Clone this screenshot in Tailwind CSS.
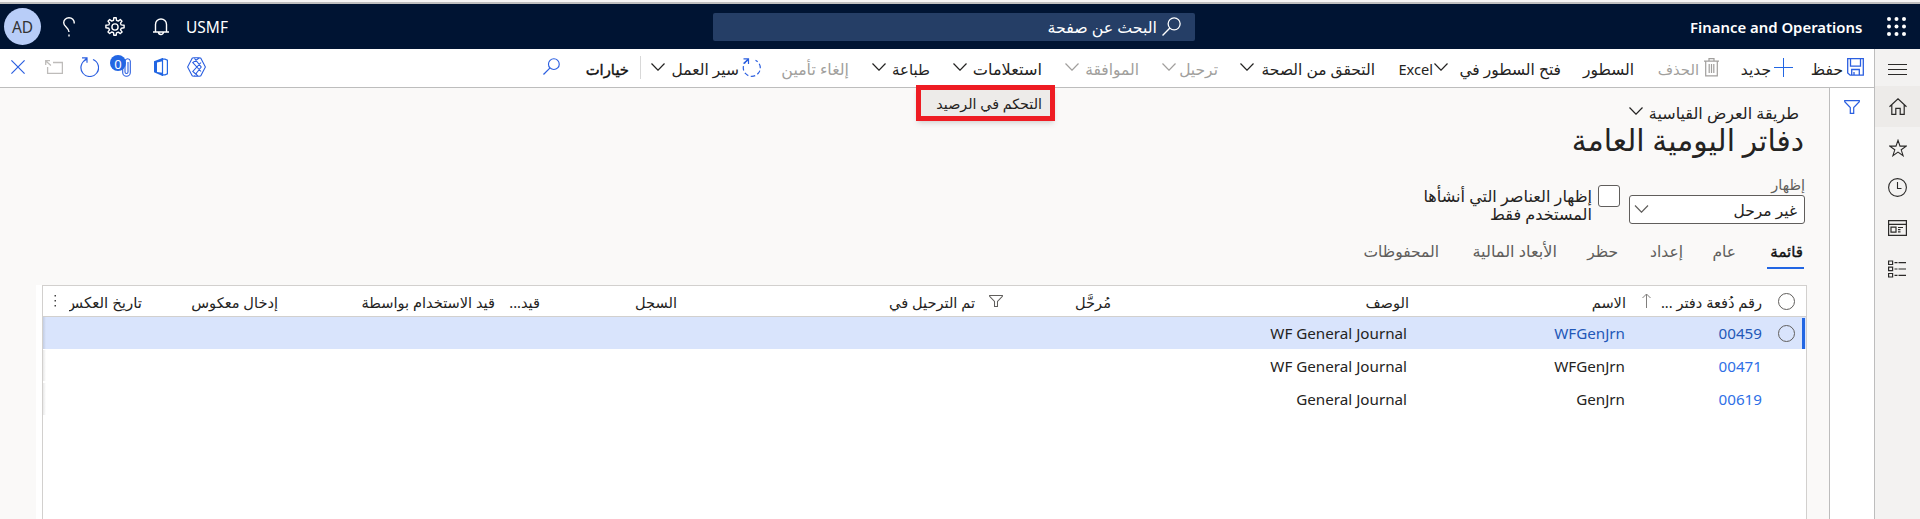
<!DOCTYPE html>
<html lang="ar" dir="rtl">
<head>
<meta charset="utf-8">
<title>Finance and Operations</title>
<script src="https://cdn.jsdelivr.net/npm/@tailwindcss/browser@4"></script>
</head>
<body class="h-[519px] w-[1920px] overflow-hidden bg-[#faf9f8] font-['Noto_Sans','DejaVu_Sans',sans-serif] text-[15.5px] leading-5 text-[#242322] whitespace-nowrap">
<svg class="hidden">
  <symbol id="chev" viewBox="0 0 14 8"><path d="M.5 .5 7 7.2 13.500 .5" fill="none" stroke="currentColor" stroke-width="1.2"/></symbol>
  <symbol id="mag" viewBox="0 0 18 18"><circle cx="11.500" cy="6.500" r="5.700" fill="none" stroke="currentColor" stroke-width="1.200"/><path d="M7.500 10.500.5 17.500" stroke="currentColor" stroke-width="1.300"/></symbol>
  <symbol id="funnel" viewBox="0 0 16 14"><path d="M.7.7h14.600v1L9.700 7.500v5.800H6.300V7.500L.7 1.700Z" fill="none" stroke="currentColor" stroke-width="1.200"/></symbol>
</svg>

<div class="h-1 border-b-2 border-[#bfbfbf] bg-[#f5f5f5]"></div>
<!-- Top bar -->
<header class="flex h-[45px] items-center bg-[#001433] text-white">
  <svg class="ms-[14px] mb-px h-[19px] w-[19px]" viewBox="0 0 19 19" fill="#fff"><g id="r"><circle cx="2" cy="2" r="2"/><circle cx="9.500" cy="2" r="2"/><circle cx="17" cy="2" r="2"/></g><use href="#r" y="7.500"/><use href="#r" y="15"/></svg>
  <div dir="ltr" class="mr-[23px] w-[174px] text-[14.9px] font-semibold">Finance and Operations</div>
  <div class="ms-[495px] flex h-7 w-[482px] items-center rounded-[2px] bg-[#253e66]">
    <svg class="ms-[14px] h-[19px] w-[19px]"><use href="#mag"/></svg>
    <div class="ms-[5px] text-[15.8px]">البحث عن صفحة</div>
  </div>
  <div dir="ltr" class="mr-[485px] w-[42px] pt-px">USMF</div>
  <svg class="ms-[17px] h-[18px] w-[16px]" viewBox="0 0 16 18" fill="none" stroke="#fff" stroke-width="1.400"><path d="M2.500 13.500V6.500a5.500 5.500 0 0 1 11 0v7M0 14h16M5.500 14a2.500 2.500 0 0 0 5 0"/></svg>
  <svg class="ms-[28px] h-[20px] w-[20px]" viewBox="0 0 20 20" fill="none" stroke="#fff" stroke-width="1.400"><circle cx="10" cy="10" r="3.100"/><path stroke-linejoin="round" d="M8.500 3.300 8.800.8h2.400l.3 2.500 1.800.8 2-1.600 1.700 1.700-1.500 2 .7 1.700 2.900.4v2.500l-2.800.4-.8 1.700 1.600 2-1.800 1.700-2-1.500-1.800.7-.3 2.400H8.800l-.3-2.500-1.800-.7-2 1.500L3 14.900l1.500-2-.7-1.700L.9 10.800V8.300l2.900-.4.7-1.700L3 4.200l1.700-1.700 2 1.600Z"/></svg>
  <svg class="ms-[30px] h-[20px] w-[12px]" viewBox="0 0 12 20" fill="none" stroke="#fff" stroke-width="1.400"><path d="M11.300 6.500C11.300 3 9 .8 6 .8S.7 3 .7 5.700c0 4.300 5.300 5 5.300 9.300M6 17.500v2"/></svg>
  <div class="ms-[22px] flex size-[37px] items-center justify-center rounded-full bg-[#b8cdf8] pt-px text-[15.5px] text-[#333]">AD</div>
</header>

<div class="flex h-[470px]">
  <!-- Navigation rail -->
  <nav class="flex w-[46px] flex-col border-l border-[#bdbdbd] bg-[#f3f2f1] text-[#2b2a29]">
    <div class="flex h-[37px] items-center justify-center pt-1"><svg class="h-[12px] w-[19px]" viewBox="0 0 19 12" stroke="currentColor" stroke-width="1"><path d="M0 .5h19M0 5.500h19M0 10.500h19"/></svg></div>
    <div class="flex h-[41px] items-center justify-center bg-[#edebe9]"><svg class="h-[17px] w-[18px]" viewBox="0 0 18 17" fill="none" stroke="currentColor" stroke-width="1.200"><path d="M.5 8.700 9 .8l8.500 7.900M2.800 6.800v9.600h4v-6h4.400v6h4V6.800"/></svg></div>
    <div class="flex h-[41px] items-center justify-center"><svg class="h-[18px] w-[18px]" viewBox="0 0 18 18" fill="none" stroke="currentColor" stroke-width="1.100"><path d="m9 1.300 2 5.800h6.200l-5 3.700 1.900 5.900L9 13.100l-5.100 3.600 1.900-5.900-5-3.700H7Z"/></svg></div>
    <div class="flex h-[39px] items-center justify-center"><svg class="h-[19px] w-[19px]" viewBox="0 0 19 19" fill="none" stroke="currentColor" stroke-width="1.100"><circle cx="9.500" cy="9.500" r="8.900"/><path d="M9.500 4v6.500h4"/></svg></div>
    <div class="flex h-[41px] items-center justify-center"><svg class="h-[16px] w-[19px]" viewBox="0 0 19 16" fill="none" stroke="currentColor" stroke-width="1.200"><path d="M.6.6h17.800v14.800H.6ZM.6 4.300h17.800M3 7.200h5v5H3ZM10 7.500h5M10 9.700h2.500M10 11.900h2.500"/></svg></div>
    <div class="flex h-[41px] items-center justify-center"><svg class="h-[18px] w-[19px]" viewBox="0 0 19 18" fill="none" stroke="currentColor" stroke-width="1.200"><path d="M.6 1h4v3.500h-4ZM.6 7.200h4v3.500h-4ZM.6 13.500h4V17h-4ZM6.500 2.700h3M10.500 2.700H18M6.500 9h3M10.500 9H18M6.500 15.300h3M10.500 15.300H18"/></svg></div>
  </nav>

  <div class="flex w-[1874px] flex-col">
    <!-- Action bar -->
    <div class="relative flex h-[39px] items-center border-b border-[#bdbdbd] bg-white pt-px">
      <svg class="ms-[10px] mb-[3px] h-[18px] w-[17px] text-[#2b5fe0]" viewBox="0 0 17 18" fill="none" stroke="currentColor" stroke-width="1.300"><path d="M.7.7h15.600v16.500H3.200L.7 14.900ZM3.500.7v7.500h10V.7M4.700 17v-5.500h7.600V17M7 17v-3"/></svg>
      <div class="ms-[4px] w-[31px] pt-px">حفظ</div>
      <svg class="ms-[19px] mb-[3px] h-[19px] w-[19px]" viewBox="0 0 19 19"><path d="M9.500 0v19M0 9.500h19" stroke="#2266e3"/></svg>
      <div class="ms-[3px] w-[30px] pt-px">جديد</div>
      <svg class="ms-[22px] mb-[3px] h-[19px] w-[15px] text-[#a19f9d]" viewBox="0 0 15 19" fill="none" stroke="currentColor" stroke-width="1.200"><path d="M0 3.200h15M5 3V.7h5V3M1.700 3.200v14.700h11.600V3.200M5.200 6v9M7.500 6v9M9.800 6v9"/></svg>
      <div class="ms-[5px] w-[41px] pt-px text-[14.8px] text-[#a19f9d]">الحذف</div>
      <div class="ms-[24px] w-[50px] pt-px">السطور</div>
      <div class="ms-[23px] w-[103px] pt-px">فتح السطور في</div>
      <svg class="ms-[10px] mb-[4px] h-[8px] w-[14px]"><use href="#chev"/></svg>
      <div class="ms-[1px] w-[34px] pt-px text-[14.6px]">Excel</div>
      <div class="ms-[24px] w-[115px] pt-px">التحقق من الصحة</div>
      <svg class="ms-[6px] mb-[4px] h-[8px] w-[14px]"><use href="#chev"/></svg>
      <div class="ms-[22px] w-[37px] pt-px text-[#a19f9d]">ترحيل</div>
      <svg class="ms-[5px] mb-[4px] h-[8px] w-[14px] text-[#a19f9d]"><use href="#chev"/></svg>
      <div class="ms-[23px] w-[54px] pt-px text-[#a19f9d]">الموافقة</div>
      <svg class="ms-[6px] mb-[4px] h-[8px] w-[14px] text-[#a19f9d]"><use href="#chev"/></svg>
      <div class="ms-[23px] w-[69px] pt-px text-[16.2px]">استعلامات</div>
      <svg class="ms-[6px] mb-[4px] h-[8px] w-[14px]"><use href="#chev"/></svg>
      <div class="ms-[23px] w-[38px] pt-px text-[15px]">طباعة</div>
      <svg class="ms-[6px] mb-[4px] h-[8px] w-[14px]"><use href="#chev"/></svg>
      <div class="ms-[23px] w-[68px] pt-px text-[15.8px] text-[#a19f9d]">إلغاء تأمين</div>
      <svg class="ms-[20px] mb-[3px] h-[19px] w-[19px] text-[#2b5fe0]" viewBox="0 0 19 19" fill="none" stroke="currentColor" stroke-width="1.200"><path d="M5.500 2.500a8.500 8.500 0 1 0 8-.3" stroke-dasharray="4.500 2.500"/><path d="M1.500.9h5v5M6.500.9 1.500 5.500"/></svg>
      <div class="ms-[3px] w-[68px] pt-px">سير العمل</div>
      <svg class="ms-[6px] mb-[4px] h-[8px] w-[14px]"><use href="#chev"/></svg>
      <div class="ms-[10px] mb-[3px] h-[23px] w-px bg-[#d8d8d8]"></div>
      <div class="ms-[11px] w-[43px] pt-px text-[14.8px] text-[#111] [-webkit-text-stroke:0.4px]">خيارات</div>
      <svg class="ms-[26px] mb-[5px] h-[17px] w-[17px] text-[#2b5fe0]"><use href="#mag"/></svg>
      <svg class="ms-[337px] mb-[3px] h-[20px] w-[19px] text-[#2b5fe0]" viewBox="0 0 19 20" fill="none" stroke="currentColor" stroke-width="1.100"><path d="M6.500.8 5.200 1.300.6 10l4.600 8.700 1.300.5M12.500.8l1.300.5 4.600 8.700-4.600 8.700-1.300.5M6.500.8h6M6.500 19.200h6M7.500 1.500 14.200 10 7.500 18.500M12.500.8 5.800 5.500 14 14.500M14 5.500 5.800 14.500 11 19"/></svg>
      <svg class="ms-[19px] mb-[3px] h-[18px] w-[14px]" viewBox="0 0 14 18"><path d="M8.500 0 0 3.200v11L8.500 18v-3.200L3 14V4.500l5.500-1.300Z" fill="#2266e3"/><path d="M8.500 1.200H11l2.400 1v13.600l-2.400 1H8.500M8.500 0v18" fill="none" stroke="#2266e3" stroke-width="1.200"/></svg>
      <div class="relative mb-[3px] ms-[23px] h-[22px] w-[21px]">
        <svg class="absolute right-0 top-px h-[20px] w-[9px]" viewBox="0 0 9 20" fill="none" stroke="#2b5fe0" stroke-width="1.100"><path d="M.7 4v11.500a3.800 3.800 0 0 0 7.600 0V4a2.700 2.700 0 0 0-5.300 0v11a1.500 1.500 0 0 0 3 0V5"/></svg>
        <div class="absolute -top-[1px] left-0 flex size-[16px] items-center justify-center rounded-full bg-[#2266e3] pt-px text-[13px] text-white">0</div>
      </div>
      <svg class="ms-[11px] mb-[3px] h-[20px] w-[19px] text-[#2b5fe0]" viewBox="0 0 19 20" fill="none" stroke="currentColor" stroke-width="1.200"><path d="M6.500 2.500a8.800 8.800 0 1 0 6.500 0M2 .8h5v5M7 .8 3.500 4.500"/></svg>
      <svg class="ms-[17px] mb-[3px] h-[14px] w-[18px] text-[#bebcba]" viewBox="0 0 18 14" fill="none" stroke="currentColor" stroke-width="1.300"><path d="M8 2.500h9.400v10.800H2.600V7M.7 5V.7H5M.9.9l5 4.500"/></svg>
      <svg class="ms-[20px] mb-[3px] h-[14px] w-[14px]" viewBox="0 0 14 14"><path d="m.4.4 13.200 13.200M13.600.4.4 13.600" stroke="#2b5fe0" stroke-width="1.200"/></svg>
      <!-- Open submenu -->
      <div class="absolute left-[916px] top-[36px] z-10 h-[36px] w-[139px] border-[5px] border-[#ee1c23] bg-[#edebe9] ps-[8px] pt-[4px] text-[14.3px] shadow-md">التحكم في الرصيد</div>
    </div>

    <div class="flex h-[431px]">
      <aside class="flex w-[45px] justify-center border-l border-[#bdbdbd] bg-white pt-[12px] text-[#2b5fe0]"><svg class="h-[14px] w-[16px]"><use href="#funnel"/></svg></aside>
      <main class="flex w-[1829px] flex-col">
        <div class="flex h-[32px] items-center pt-[18px] ps-[30px]"><span class="w-[150px] text-[16px]">طريقة العرض القياسية</span><svg class="ms-[6px] mb-[4px] h-[8px] w-[14px]"><use href="#chev"/></svg></div>
        <h1 class="h-[58px] ps-[25px] text-[29.8px] leading-10">دفاتر اليومية العامة</h1>
        <div class="flex h-[48px] ps-[24px]">
          <div class="w-[176px]">
            <div class="-mt-[4px] h-[21px] pe-px text-[14.5px] text-[#605e5c]">إظهار</div>
            <div class="flex h-[29px] items-center justify-between rounded-[3px] border border-[#605e5c] bg-white pe-[4px] ps-[7px] pt-px"><span>غير مرحل</span><svg class="mb-[3px] h-[8px] w-[15px] text-[#605e5c]"><use href="#chev"/></svg></div>
          </div>
          <div class="ms-[9px] mt-[7px] size-[22px] rounded-[3px] border border-[#605e5c] bg-white"></div>
          <div class="ms-[6px] mt-[9px] text-[16.1px] leading-[18px]">إظهار العناصر التي أنشأها<br>المستخدم فقط</div>
        </div>
        <div class="mt-[12px] flex h-[31px] ps-[25px] text-[#605e5c]">
          <div class="h-[31px] w-[37px] border-b-2 border-[#2266e3] pt-[3px] ps-[1px] text-[15px] text-[#111] [-webkit-text-stroke:0.4px]">قائمة</div>
          <div class="ms-[31px] w-[22px] pt-[3px]">عام</div>
          <div class="ms-[31px] w-[33px] pt-[3px]">إعداد</div>
          <div class="ms-[32px] w-[30px] pt-[3px]">حظر</div>
          <div class="ms-[31px] w-[85px] pt-[3px] text-[16.2px]">الأبعاد المالية</div>
          <div class="ms-[33px] w-[76px] pt-[3px]">المحفوظات</div>
        </div>
        <!-- Journal grid -->
        <div class="ms-[22px] mt-[16px] flex w-[1771px] bg-white">
          <div class="h-[234px] w-[1765px] border-x border-t border-[#d2d0ce]">
            <div class="flex h-[31px] items-center border-b border-[#d2d0ce] text-[14.6px]">
              <div class="ms-[11px] size-[17px] rounded-full border border-[#605e5c]"></div>
              <div class="ms-[16px] w-[101px] pt-px">رقم دُفعة دفتر ...</div>
              <svg class="ms-[10px] mb-px h-[15px] w-[9px]" viewBox="0 0 9 15" fill="none" stroke="#807e7c"><path d="M4.500 15V1M.5 5l4-4 4 4"/></svg>
              <div class="ms-[16px] w-[33px] pt-px">الاسم</div>
              <div class="ms-[184px] w-[44px] pt-px">الوصف</div>
              <div class="ms-[254px] w-[32px] pt-px">مُرحَّل</div>
              <svg class="ms-[76px] h-[14px] w-[14px] text-[#605e5c]"><use href="#funnel"/></svg>
              <div class="ms-[14px] w-[84px] pt-px">تم الترحيل في</div>
              <div class="ms-[214px] w-[39px] pt-px">السجل</div>
              <div class="ms-[98px] w-[31px] pt-px">قيد...</div>
              <div class="ms-[14px] w-[133px] pt-px">قيد الاستخدام بواسطة</div>
              <div class="ms-[84px] w-[86px] pt-px">إدخال معكوس</div>
              <div class="ms-[50px] w-[73px] pt-px overflow-hidden text-[15px]">تاريخ العكس</div>
              <svg class="ms-[12px] h-[12px] w-[3px]" viewBox="0 0 3 12" fill="#444"><path d="M.5 0h1.500v1.500H.5ZM.5 5h1.500v1.500H.5ZM.5 10h1.500v1.500H.5Z"/></svg>
            </div>
            <div class="flex h-[32px] items-center bg-[#d9e4fc] text-[15.2px]">
              <div class="ms-[1px] h-[31px] w-[3px] bg-[#2266e3]"></div>
              <div class="ms-[7px] size-[17px] rounded-full border border-[#605e5c]"></div>
              <div class="ms-[16px] w-[137px] text-[#2358b8]">00459</div>
              <div class="w-[218px] text-[#2358b8]">WFGenJrn</div>
              <div>WF General Journal</div>
              <div class="ms-auto h-[32px] w-[3px] bg-linear-to-l from-[#d9e4fc] to-[#c3cde3]"></div>
            </div>
            <div class="flex h-[33px] items-center text-[15.2px]">
              <div class="ms-[44px] w-[137px] text-[#2f6fe6]">00471</div>
              <div class="w-[218px]">WFGenJrn</div>
              <div>WF General Journal</div>
              <div class="ms-auto h-[31px] w-[3px] bg-linear-to-l from-white to-[#e8e8e8]"></div>
            </div>
            <div class="flex h-[33px] items-center text-[15.2px]">
              <div class="ms-[44px] w-[137px] text-[#2f6fe6]">00619</div>
              <div class="w-[218px]">GenJrn</div>
              <div>General Journal</div>
              <div class="ms-auto h-[32px] w-[3px] bg-linear-to-l from-white to-[#e8e8e8]"></div>
            </div>
          </div>
        </div>
      </main>
    </div>
  </div>
</div>
</body>
</html>
